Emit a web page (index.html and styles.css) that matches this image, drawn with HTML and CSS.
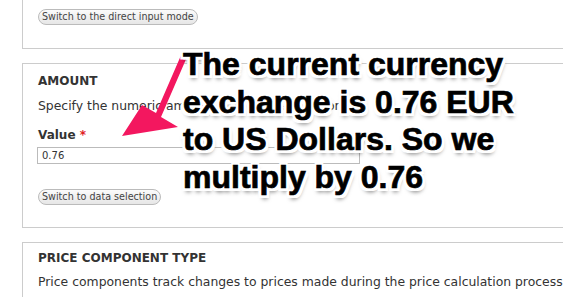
FILE: index.html
```html
<!DOCTYPE html>
<html>
<head>
<meta charset="utf-8">
<link rel="stylesheet" href="styles.css">
</head>
<body>
<div class="page">
  <div class="fieldset fs-top">
    <button class="btn">Switch to the direct input mode</button>
  </div>
  <div class="fieldset fs-amount">
    <div class="legend">AMOUNT</div>
    <div class="desc">Specify the numeric amount of the price component</div>
    <div class="label">Value <span class="req">*</span></div>
    <div class="input">0.76</div>
    <button class="btn">Switch to data selection</button>
  </div>
  <div class="fieldset fs-type">
    <div class="legend">PRICE COMPONENT TYPE</div>
    <div class="desc">Price components track changes to prices made during the price calculation process</div>
  </div>
</div>
<svg class="arrow" width="563" height="297" viewBox="0 0 563 297">
  <path d="M182 53 L187 57 L161 117 L178 127 L122 136 L142 105 L156 113 Z" fill="#f3175f"/>
</svg>
<div class="note">The current currency<br>exchange is 0.76 EUR<br>to US Dollars. So we<br>multiply by 0.76</div>
</body>
</html>
```
FILE: styles.css
```css
html, body {
  margin: 0;
  padding: 0;
  background: #fff;
  overflow: hidden;
  width: 563px;
  height: 297px;
}
.page {
  padding-left: 22px;
  font-family: "DejaVu Sans", Verdana, sans-serif;
  color: #333;
}
.fieldset {
  border: 1px solid #ccc;
  width: 640px;
  box-sizing: border-box;
  padding-left: 15px;
}
.fs-top {
  border-top: none;
  height: 49px;
  padding-top: 9px;
  margin-bottom: 14px;
}
.fs-amount {
  height: 165px;
  padding-top: 10px;
  margin-bottom: 14px;
}
.fs-type {
  padding-top: 8px;
  height: 80px;
}
.btn {
  display: block;
  font-family: "DejaVu Sans", Verdana, sans-serif;
  font-size: 9.6px;
  color: #444;
  height: 16px;
  padding: 0 3px;
  border: 1px solid #bbb;
  border-radius: 8px;
  background: linear-gradient(#fbfbfb, #e6e6e6);
  line-height: 14px;
  margin: 0;
}
.legend {
  font-weight: bold;
  font-size: 12px;
  color: #333;
  height: 15px;
  line-height: 15px;
}
.desc {
  font-size: 12.4px;
  margin-top: 10px;
  line-height: 14px;
  color: #333;
  white-space: nowrap;
}
.fs-type .desc { margin-top: 9px; }
.label {
  font-weight: bold;
  font-size: 12px;
  margin-top: 15px;
  line-height: 14px;
}
.req { color: #e0201e; }
.input {
  width: 323px;
  height: 17px;
  box-sizing: border-box;
  border: 1px solid #bbb;
  margin-top: 5px;
  margin-left: -1px;
  font-size: 10px;
  line-height: 15px;
  padding-left: 4px;
  color: #333;
  margin-bottom: 25px;
}
.arrow {
  position: absolute;
  left: 0;
  top: 0;
}
.note {
  position: absolute;
  left: 183px;
  top: 46px;
  font-family: "Liberation Sans", Arial, sans-serif;
  font-weight: bold;
  font-size: 32px;
  line-height: 37.7px;
  color: #000;
  white-space: nowrap;
  -webkit-text-stroke: 0.7px #000;
  text-shadow:
    2px 0 0 #fff, -2px 0 0 #fff, 0 2px 0 #fff, 0 -2px 0 #fff,
    2px 2px 0 #fff, -2px -2px 0 #fff, 2px -2px 0 #fff, -2px 2px 0 #fff,
    3px 0 0 #fff, -3px 0 0 #fff, 0 3px 0 #fff, 0 -3px 0 #fff,
    3px 3px 0 #fff, -3px 3px 0 #fff,
    1px 4px 4px rgba(0,0,0,0.55);
}
```
